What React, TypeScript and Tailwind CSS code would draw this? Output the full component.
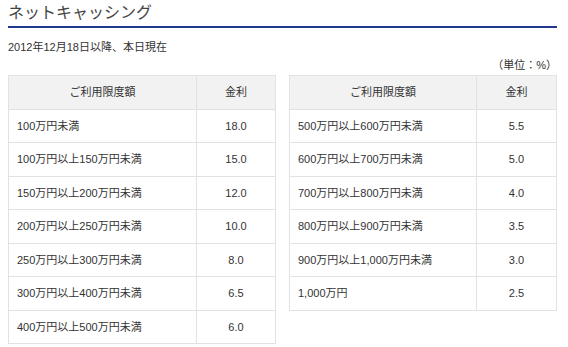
import React from "react";

const left: [string, string][] = [
  ["100万円未満", "18.0"],
  ["100万円以上150万円未満", "15.0"],
  ["150万円以上200万円未満", "12.0"],
  ["200万円以上250万円未満", "10.0"],
  ["250万円以上300万円未満", "8.0"],
  ["300万円以上400万円未満", "6.5"],
  ["400万円以上500万円未満", "6.0"],
];
const right: [string, string][] = [
  ["500万円以上600万円未満", "5.5"],
  ["600万円以上700万円未満", "5.0"],
  ["700万円以上800万円未満", "4.0"],
  ["800万円以上900万円未満", "3.5"],
  ["900万円以上1,000万円未満", "3.0"],
  ["1,000万円", "2.5"],
];

function RateTable({ rows, firstW }: { rows: [string, string][]; firstW: string }) {
  return (
    <table className="w-[268px] border-collapse table-fixed self-start">
      <colgroup>
        <col className={firstW} />
        <col />
      </colgroup>
      <thead>
        <tr>
          <th className="h-[33.5px] border border-[#e2e2e2] bg-[#f2f2f2] font-normal text-center p-0">ご利用限度額</th>
          <th className="h-[33.5px] border border-[#e2e2e2] bg-[#f2f2f2] font-normal text-center p-0">金利</th>
        </tr>
      </thead>
      <tbody>
        {rows.map(([a, b]) => (
          <tr key={a}>
            <td className="h-[33.5px] border border-[#e2e2e2] pl-[8px] p-0">{a}</td>
            <td className="h-[33.5px] border border-[#e2e2e2] text-center p-0">{b}</td>
          </tr>
        ))}
      </tbody>
    </table>
  );
}

export default function App() {
  return (
    <div
      className="w-[568px] h-[347px] bg-white text-[#333] text-[11px] overflow-hidden"
      style={{ fontFamily: '"Liberation Sans", Arial, "Noto Sans CJK JP", sans-serif' }}
    >
      <div className="ml-[8px] w-[549px]">
        <h1 className="text-[16px] leading-[26px] text-[#444] font-normal border-b-2 border-[#213a8f] tracking-[0px]">
          ネットキャッシング
        </h1>
        <div className="mt-[11px] leading-[16px]">2012年12月18日以降、本日現在</div>
        <div className="mt-[2px] leading-[16px] text-right pr-0">（単位：%）</div>
        <div className="mt-[2px] flex gap-[13px]">
          <RateTable rows={left} firstW="w-[188px]" />
          <RateTable rows={right} firstW="w-[187px]" />
        </div>
      </div>
    </div>
  );
}
